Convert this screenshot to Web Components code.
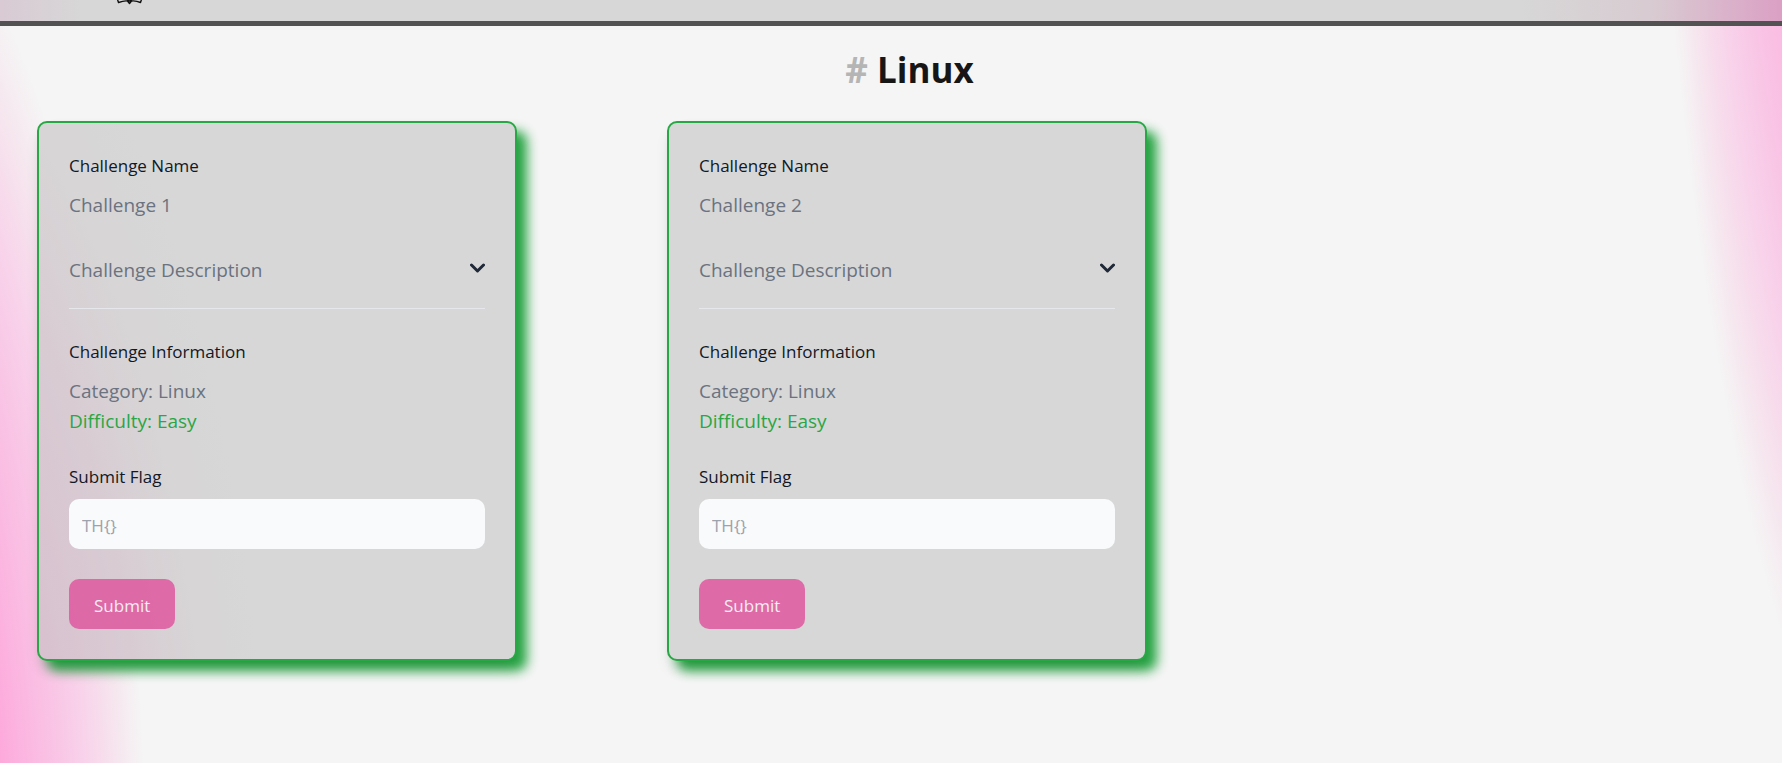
<!DOCTYPE html>
<html lang="en">
<head>
<meta charset="utf-8">
<title>Linux challenges</title>
<style>
html, body { margin: 0; min-height: 100%; }
body {
  min-height: 100vh;
  font-family: "Open Sans", "Noto Sans", sans-serif;
  background:
    radial-gradient(296px 1039px at -150px calc(100% + 137px), #fea5da 50%, #fbb8e1 62%, #f9c6e6 72%, #f8d5eb 82%, #f6e5ee 91%, rgba(245,245,245,0) 100%),
    radial-gradient(286px 1450px at calc(100% + 150px) -600px, #fea5da 50%, #fbb8e1 65%, #f9c6e6 76%, #f8d5eb 85%, #f6e5ee 93%, rgba(245,245,245,0) 100%),
    #f5f5f5;
}
</style>
</head>
<body>
<ctf-page></ctf-page>

<template id="page-template">
  <style>
    :host { display: block; }
    main { padding: 20px 0 40px 37px; }
    h1 { margin: 0 0 27px; text-align: center; font-size: 35px; line-height: 48px; font-weight: 700; color: #161616; }
    h1 span { color: #b5b5b5; }
    .grid { display: grid; grid-template-columns: repeat(3, 480px); gap: 150px; }
  </style>
  <site-nav></site-nav>
  <main>
    <h1><span>#</span> Linux</h1>
    <div class="grid">
      <challenge-card category="Linux" difficulty="Easy">Challenge 1</challenge-card>
      <challenge-card category="Linux" difficulty="Easy">Challenge 2</challenge-card>
    </div>
  </main>
</template>

<template id="nav-template">
  <style>
    :host {
      display: block; border-bottom: 5px solid #525252;
      background: linear-gradient(to right, #d9cad4, #d7d7d7 80px, #d7d7d7 calc(100% - 260px), #d8cbd1 calc(100% - 130px), #dab4cb calc(100% - 60px), #dba0c4);
    }
    nav { height: 21px; padding: 0 117px; overflow: hidden; }
    svg { display: block; }
  </style>
  <nav aria-label="Main">
    <svg width="26" height="5" viewBox="0 0 26 5" fill="none" stroke="#111" stroke-width="1.4" stroke-linejoin="round">
      <path d="M0 -2 L1.500 2.500 Q7 .5 10.500 1 L12.500 3.500 L14.500 1 Q19 .5 23.500 2.500 L25 -2 M10 0 L12.500 1 L15 0"/>
    </svg>
  </nav>
</template>

<template id="card-template">
  <style>
    :host {
      display: block; box-sizing: border-box; padding: 30px;
      border: 2px solid #28a745; border-radius: 10px;
      background: #d7d7d7 radial-gradient(420px 1039px at -150px calc(100% + 137px), #d9c0cf 50%, #d8cdd3 73%, #d7d5d6 86%, #d7d7d7 100%) fixed;
      box-shadow: 0 10px 15px -3px rgba(0,0,0,.1), 10px 10px 12px #28a745;
    }
    h2, label { display: block; margin: 0 0 12px; font-size: 17px; line-height: 25px; font-weight: 400; color: #111827; }
    label { margin-bottom: 10px; }
    p { margin: 0; font-size: 19px; line-height: 30px; color: #6b7280; }
    .easy { color: #28a745; }
    .toggle {
      display: flex; align-items: center; justify-content: space-between; width: 100%;
      margin: 10px 0 30px; padding: 25px 0 23px; border: 0; border-bottom: 1px solid #e5e7eb;
      background: none; font: inherit; font-size: 19px; line-height: 30px; color: #6b7280; text-align: left;
    }
    .toggle svg { margin-bottom: 4px; }
    form { margin: 28px 0 0; }
    input {
      display: block; box-sizing: border-box; width: 100%; height: 50px; margin: 0 0 30px;
      padding: 2px 13px 0; border: 0; border-radius: 10px; background: #f9fafb;
      font: inherit; font-size: 17px; color: #111827;
    }
    input::placeholder { color: #9ca3af; opacity: 1; }
    .submit {
      display: block; height: 50px; padding: 2px 25px 0; border: 0; border-radius: 10px;
      background: #df5fa3; color: #f9f0f5; opacity: .9; font: inherit; font-size: 17px;
    }
  </style>
  <h2>Challenge Name</h2>
  <p><slot></slot></p>
  <button class="toggle" type="button" aria-expanded="false">Challenge Description
    <svg width="15" height="10" viewBox="0 0 15 10" fill="none" stroke="#1f2937" stroke-width="3" stroke-linecap="round" stroke-linejoin="round" aria-hidden="true"><path d="M1.500 2 L7.500 8 L13.500 2"/></svg>
  </button>
  <h2>Challenge Information</h2>
  <p>Category: <span class="category"></span></p>
  <p class="easy">Difficulty: <span class="difficulty"></span></p>
  <form>
    <label for="flag">Submit Flag</label>
    <input id="flag" type="text" placeholder="TH{}">
    <button class="submit" type="submit">Submit</button>
  </form>
</template>

<script>
class TemplateElement extends HTMLElement {
  constructor() {
    super();
    const template = document.getElementById(this.constructor.template);
    this.attachShadow({ mode: "open" }).append(template.content.cloneNode(true));
  }
}
class SiteNav extends TemplateElement { static template = "nav-template"; }
class ChallengeCard extends TemplateElement {
  static template = "card-template";
  connectedCallback() {
    for (const name of ["category", "difficulty"])
      this.shadowRoot.querySelector("." + name).textContent = this.getAttribute(name);
    this.shadowRoot.querySelector("form").addEventListener("submit", e => e.preventDefault());
  }
}
class CtfPage extends TemplateElement { static template = "page-template"; }
customElements.define("site-nav", SiteNav);
customElements.define("challenge-card", ChallengeCard);
customElements.define("ctf-page", CtfPage);
</script>
</body>
</html>
